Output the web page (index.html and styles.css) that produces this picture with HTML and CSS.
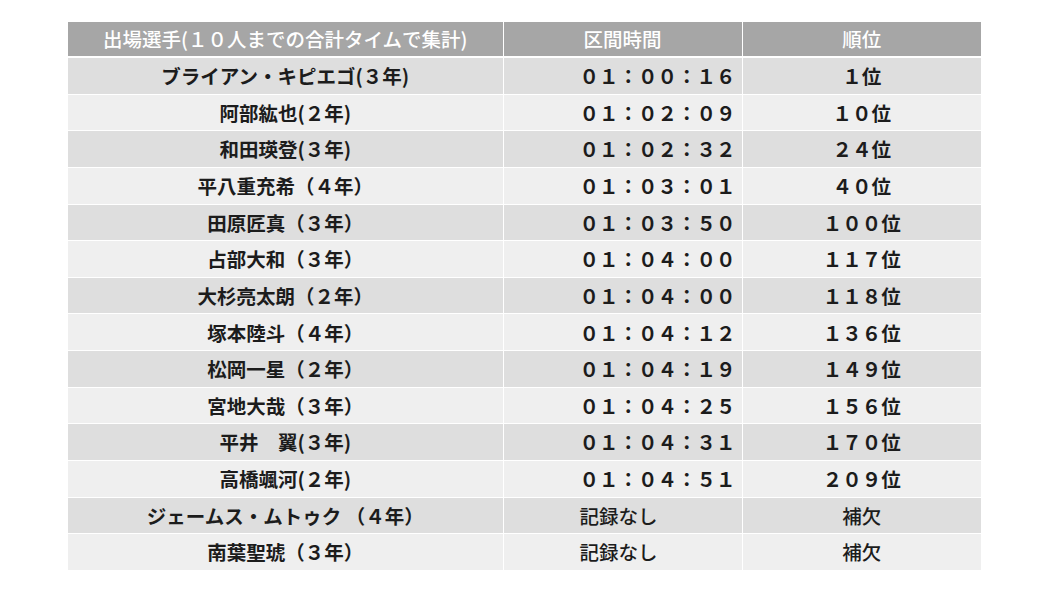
FILE: index.html
```html
<!DOCTYPE html>
<html lang="ja">
<head>
<meta charset="utf-8">
<link rel="stylesheet" href="styles.css">
</head>
<body>
<table class="results">
  <colgroup>
    <col class="c-name">
    <col class="c-time">
    <col class="c-rank">
  </colgroup>
  <thead>
    <tr>
      <th>出場選手(１０人までの合計タイムで集計)</th>
      <th>区間時間</th>
      <th>順位</th>
    </tr>
  </thead>
  <tbody>
    <tr><td class="name">ブライアン・キピエゴ(３年)</td><td class="time">０１：００：１６</td><td class="rank">１位</td></tr>
    <tr><td class="name">阿部紘也(２年)</td><td class="time">０１：０２：０９</td><td class="rank">１０位</td></tr>
    <tr><td class="name">和田瑛登(３年)</td><td class="time">０１：０２：３２</td><td class="rank">２４位</td></tr>
    <tr><td class="name">平八重充希（４年）</td><td class="time">０１：０３：０１</td><td class="rank">４０位</td></tr>
    <tr><td class="name">田原匠真（３年）</td><td class="time">０１：０３：５０</td><td class="rank">１００位</td></tr>
    <tr><td class="name">占部大和（３年）</td><td class="time">０１：０４：００</td><td class="rank">１１７位</td></tr>
    <tr><td class="name">大杉亮太朗（２年）</td><td class="time">０１：０４：００</td><td class="rank">１１８位</td></tr>
    <tr><td class="name">塚本陸斗（４年）</td><td class="time">０１：０４：１２</td><td class="rank">１３６位</td></tr>
    <tr><td class="name">松岡一星（２年）</td><td class="time">０１：０４：１９</td><td class="rank">１４９位</td></tr>
    <tr><td class="name">宮地大哉（３年）</td><td class="time">０１：０４：２５</td><td class="rank">１５６位</td></tr>
    <tr><td class="name">平井　翼(３年)</td><td class="time">０１：０４：３１</td><td class="rank">１７０位</td></tr>
    <tr><td class="name">高橋颯河(２年)</td><td class="time">０１：０４：５１</td><td class="rank">２０９位</td></tr>
    <tr><td class="name">ジェームス・ムトゥク （４年）</td><td class="time none">記録なし</td><td class="rank none">補欠</td></tr>
    <tr><td class="name">南葉聖琥（３年）</td><td class="time none">記録なし</td><td class="rank none">補欠</td></tr>
  </tbody>
</table>
</body>
</html>
```

FILE: styles.css
```css
html, body {
  margin: 0;
  padding: 0;
  background: #ffffff;
}

body {
  padding: 22px 0 0 68px;
  font-family: "Noto Sans CJK JP", "Noto Sans", sans-serif;
}

.results {
  border-collapse: collapse;
  table-layout: fixed;
  width: 913px;
  font-size: 19.5px;
  line-height: 1;
  color: #1c1c1c;
}

.c-name { width: 435px; }
.c-time { width: 239px; }
.c-rank { width: 239px; }

.results th {
  background: #a6a6a6;
  color: #ffffff;
  font-weight: 500;
  height: 34px;
  padding: 0;
  text-align: center;
  border-right: 1px solid #ffffff;
  border-bottom: 2px solid #ffffff;
}

.results td {
  height: 35.65px;
  padding: 0;
  font-weight: 700;
  border-right: 1px solid #ffffff;
  border-bottom: 1px solid #ffffff;
}

.results th:last-child,
.results td:last-child {
  border-right: none;
}

.results tbody tr:nth-child(odd) td { background: #dedede; }
.results tbody tr:nth-child(even) td { background: #efefef; }

.name { text-align: center; }
.time { text-align: left; padding-left: 76px !important; }
.rank { text-align: center; }
.none { font-weight: 500 !important; }
```
